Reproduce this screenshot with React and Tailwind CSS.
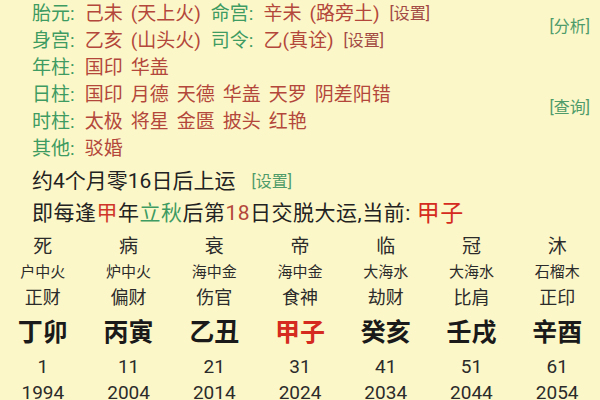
const font = { fontFamily: 'Roboto, "Noto Sans CJK SC", sans-serif' };

const Label = ({ children }) => <span className="text-[#3e9b62]">{children}:</span>;

const Words = ({ items }) => (
  <span className="flex gap-[8px] text-[#b3473b]">
    {items.map((w, i) => (
      <span key={i}>{w}</span>
    ))}
  </span>
);

const Nayin = ({ gz, ny }) => (
  <span className="flex items-center text-[#b3473b]">
    <span>{gz}</span>
    <span className="ml-[8px]">({ny})</span>
  </span>
);

const Row = ({ label, children }) => (
  <div className="h-[27px] flex items-center gap-[10px] whitespace-nowrap">
    <Label>{label}</Label>
    {children}
  </div>
);

const Btn = ({ children, className = '' }) => (
  <span className={`text-[16px] tracking-normal ${className}`}>[{children}]</span>
);

const dayun = [
  { s: '死', n: '户中火', g: '正财', p: '丁卯', a: 1, y: 1994 },
  { s: '病', n: '炉中火', g: '偏财', p: '丙寅', a: 11, y: 2004 },
  { s: '衰', n: '海中金', g: '伤官', p: '乙丑', a: 21, y: 2014 },
  { s: '帝', n: '海中金', g: '食神', p: '甲子', a: 31, y: 2024, cur: true },
  { s: '临', n: '大海水', g: '劫财', p: '癸亥', a: 41, y: 2034 },
  { s: '冠', n: '大海水', g: '比肩', p: '壬戌', a: 51, y: 2044 },
  { s: '沐', n: '石榴木', g: '正印', p: '辛酉', a: 61, y: 2054 },
];

export default function App() {
  return (
    <div className="w-[600px] h-[400px] overflow-hidden bg-[#fcf7c8] text-[19px] leading-none" style={font}>
      <div className="pl-[32px] pr-[10px]">
        <div className="flex items-center justify-between">
          <div>
            <Row label="胎元">
              <Nayin gz="己未" ny="天上火" />
              <Label>命宫</Label>
              <Nayin gz="辛未" ny="路旁土" />
              <Btn className="text-[#a24a44]">设置</Btn>
            </Row>
            <Row label="身宫">
              <Nayin gz="乙亥" ny="山头火" />
              <Label>司令</Label>
              <Words items={['乙(真诠)']} />
              <Btn className="text-[#a24a44]">设置</Btn>
            </Row>
          </div>
          <Btn className="text-[#4f9c6a]">分析</Btn>
        </div>
        <Row label="年柱">
          <Words items={['国印', '华盖']} />
        </Row>
        <div className="flex items-center justify-between">
          <div>
            <Row label="日柱">
              <Words items={['国印', '月德', '天德', '华盖', '天罗', '阴差阳错']} />
            </Row>
            <Row label="时柱">
              <Words items={['太极', '将星', '金匮', '披头', '红艳']} />
            </Row>
          </div>
          <Btn className="text-[#4f9c6a]">查询</Btn>
        </div>
        <Row label="其他">
          <Words items={['驳婚']} />
        </Row>

        <div className="mt-[5px] h-[29px] flex items-center gap-[16px] text-[21px] text-[#222] whitespace-nowrap">
          <span>约4个月零16日后上运</span>
          <Btn className="text-[#4f9c6a]">设置</Btn>
        </div>
        <div className="mt-[2px] h-[31px] flex items-center text-[21px] tracking-[0.5px] text-[#222] whitespace-nowrap">
          <span>即每逢</span>
          <span className="text-[#d0352a]">甲</span>
          <span>年</span>
          <span className="text-[#3e9b62]">立秋</span>
          <span>后第</span>
          <span className="text-[#b3473b]">18</span>
          <span>日交脱大运,当前:</span>
          <span className="ml-[6px] text-[23px] text-[#d42a20]">甲子</span>
        </div>
      </div>

      <div className="mt-[4px] grid grid-cols-7 text-center">
        {dayun.map((d) => (
          <div key={d.p} className="flex flex-col items-center">
            <div className="h-[26px] flex items-center text-[19px] text-[#2b2b2b]">{d.s}</div>
            <div className="h-[26px] flex items-center text-[15px] text-[#2b2b2b]">{d.n}</div>
            <div className="h-[26px] flex items-center text-[18px] text-[#2b2b2b]">{d.g}</div>
            <div
              className={`h-[42px] flex items-center text-[25px] font-bold ${
                d.cur ? 'text-[#d42a20]' : 'text-[#1a1a1a]'
              }`}
            >
              {d.p}
            </div>
            <div className="h-[26px] flex items-center text-[19px] text-[#2b2b2b]">{d.a}</div>
            <div className="h-[26px] flex items-center text-[19px] text-[#2b2b2b]">{d.y}</div>
          </div>
        ))}
      </div>
    </div>
  );
}
